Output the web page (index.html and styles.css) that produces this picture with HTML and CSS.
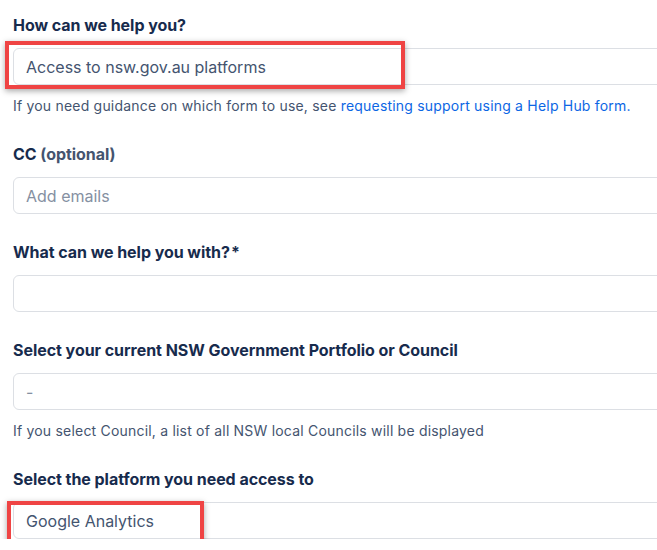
FILE: index.html
```html
<!DOCTYPE html>
<html lang="en">
<head>
  <meta charset="UTF-8" />
  <meta name="viewport" content="width=device-width, initial-scale=1.0" />
  <title>Help Hub request</title>
  <link rel="stylesheet" href="styles.css">
</head>
<body>

<form class="request-form">

  <div class="field">
    <label class="field-label">How can we help you?</label>
    <div class="field-control">
      <div class="input">Access to nsw.gov.au platforms</div>
      <span class="highlight highlight-wide"></span>
    </div>
    <p class="help-text">If you need guidance on which form to use, see <a href="#">requesting support using a Help Hub form.</a></p>
  </div>

  <div class="field">
    <label class="field-label">CC <span class="optional">(optional)</span></label>
    <div class="input placeholder">Add emails</div>
  </div>

  <div class="field">
    <label class="field-label">What can we help you with?<span class="required">*</span></label>
    <div class="input"></div>
  </div>

  <div class="field">
    <label class="field-label">Select your current NSW Government Portfolio or Council</label>
    <div class="input placeholder">-</div>
    <p class="help-text">If you select Council, a list of all NSW local Councils will be displayed</p>
  </div>

  <div class="field">
    <label class="field-label">Select the platform you need access to</label>
    <div class="field-control">
      <div class="input">Google Analytics</div>
      <span class="highlight highlight-narrow"></span>
    </div>
  </div>

</form>

</body>
</html>
```

FILE: styles.css
```css
body {
  font-family: Inter, 'Noto Sans', sans-serif;
  margin: 0;
  padding: 0;
  background-color: #ffffff;
  color: #172b4d;
  overflow: hidden;
}

.request-form {
  width: 720px;
  padding: 15px 0 0 13px;
  display: flex;
  flex-direction: column;
  gap: 28px;
}

.field {
  display: flex;
  flex-direction: column;
}

.field-label {
  font-size: 16px;
  line-height: 20px;
  font-weight: 700;
  letter-spacing: -0.05px;
  color: #172b4d;
  margin-bottom: 13px;
}

.optional {
  color: #44546f;
}

.required {
  margin-left: 1px;
}

.field-control {
  position: relative;
}

.input {
  height: 37px;
  box-sizing: border-box;
  border: 1px solid #dcdfe4;
  border-radius: 6px;
  padding: 0 12px;
  display: flex;
  align-items: center;
  font-size: 16px;
  color: #44546f;
  background: #ffffff;
}

.placeholder {
  color: #8590a2;
}

.help-text {
  margin: 11px 0 0;
  font-size: 14px;
  line-height: 20px;
  letter-spacing: 0.2px;
  color: #44546f;
}

.help-text a {
  color: #0c66e4;
  text-decoration: none;
}

/* red annotation boxes drawn over the fields */
.highlight {
  position: absolute;
  border: 4px solid #ef4444;
  box-shadow: 0 2px 6px rgba(0, 0, 0, 0.35);
  pointer-events: none;
}

.highlight-wide {
  left: -8px;
  top: -7px;
  width: 392px;
  height: 40px;
}

.highlight-narrow {
  left: -6px;
  top: -1px;
  width: 189px;
  height: 50px;
}
```
